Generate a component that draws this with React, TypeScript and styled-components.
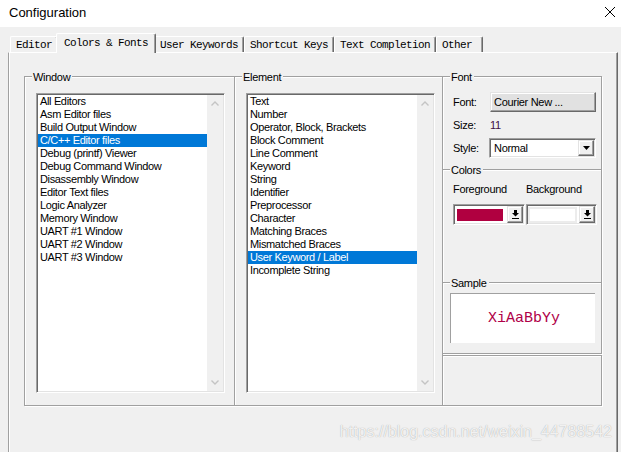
import React from 'react';
import styled, { createGlobalStyle } from 'styled-components';

const windowItems = [
	'All Editors',
	'Asm Editor files',
	'Build Output Window',
	'C/C++ Editor files',
	'Debug (printf) Viewer',
	'Debug Command Window',
	'Disassembly Window',
	'Editor Text files',
	'Logic Analyzer',
	'Memory Window',
	'UART #1 Window',
	'UART #2 Window',
	'UART #3 Window',
];

const elementItems = [
	'Text',
	'Number',
	'Operator, Block, Brackets',
	'Block Comment',
	'Line Comment',
	'Keyword',
	'String',
	'Identifier',
	'Preprocessor',
	'Character',
	'Matching Braces',
	'Mismatched Braces',
	'User Keyword / Label',
	'Incomplete String',
];

const tabs = ['Editor', 'Colors & Fonts', 'User Keywords', 'Shortcut Keys', 'Text Completion', 'Other'];

const GlobalStyle = createGlobalStyle`
	html, body {
		margin: 0;
		padding: 0;
		background: #f0f0f0;
		overflow: hidden;
	}
	body {
		font-family: "Liberation Sans", Arial, sans-serif;
	}
`;

const Window = styled.div`
	position: relative;
	width: 621px;
	height: 452px;
	display: flex;
	flex-direction: column;
	background: #f0f0f0;
	overflow: hidden;
`;

const TitleBar = styled.div`
	flex: none;
	height: 27px;
	box-sizing: border-box;
	display: flex;
	align-items: center;
	justify-content: space-between;
	padding: 0 5px 3px 9px;
	background: #fff;
	font-size: 13px;
	color: #000;
`;

const Body = styled.div`
	flex: 1;
	min-height: 0;
	display: flex;
	flex-direction: column;
	padding: 6px 4px 0 8px;
`;

const TabStrip = styled.div`
	flex: none;
	height: 19px;
	display: flex;
	align-items: flex-end;
	padding-left: 2px;
`;

const Tab = styled.div<{ $active?: boolean }>`
	box-sizing: border-box;
	height: ${(p) => (p.$active ? 20 : 16)}px;
	min-width: 47px;
	margin: 0 ${(p) => (p.$active ? -2 : 0)}px ${(p) => (p.$active ? -1 : 0)}px;
	padding: 0 ${(p) => (p.$active ? 7 : 5)}px ${(p) => (p.$active ? 1 : 0)}px;
	display: flex;
	align-items: center;
	z-index: ${(p) => (p.$active ? 2 : 1)};
	background: #f0f0f0;
	border-top: 1px solid #fff;
	border-left: 1px solid #fff;
	border-right: 1px solid #696969;
	border-radius: 2px 2px 0 0;
	box-shadow: inset -1px 0 #a0a0a0;
	font-family: "Liberation Mono", "Courier New", monospace;
	font-size: 11px;
	letter-spacing: -0.6px;
	white-space: nowrap;
	color: #000;
`;

const Panel = styled.div`
	flex: 1;
	width: 610px;
	box-sizing: border-box;
	display: flex;
	align-items: flex-start;
	padding: 23px 0 0 15px;
	border-top: 1px solid #fff;
	border-left: 1px solid #a0a0a0;
	border-right: 1px solid #696969;
	box-shadow: inset -1px 0 #a0a0a0, inset 1px 0 #fff;
`;

const Group = styled.div<{ $w: number; $h: number }>`
	position: relative;
	flex: none;
	box-sizing: border-box;
	width: ${(p) => p.$w}px;
	height: ${(p) => p.$h}px;
	border: 1px solid #a0a0a0;
	box-shadow: inset 1px 1px #fff, 1px 1px #fff;
`;

const SideColumn = styled.div`
	flex: none;
	width: 160px;
	margin-left: -1px;
	display: flex;
	flex-direction: column;
	& > * + * {
		margin-top: -1px;
	}
	& > *:last-child {
		margin-top: 1px;
	}
`;

const Legend = styled.span`
	position: absolute;
	top: -7px;
	left: 7px;
	padding: 0 2px 0 1px;
	background: #f0f0f0;
	font-size: 11px;
	line-height: 14px;
	letter-spacing: -0.3px;
	color: #000;
`;

const ListBox = styled.div`
	box-sizing: border-box;
	width: 189px;
	height: 300px;
	margin: 16px 0 0 11px;
	display: flex;
	background: #fff;
	border: 1px solid;
	border-color: #a0a0a0 #fff #fff #a0a0a0;
	box-shadow: inset 1px 1px #696969, inset -1px -1px #e3e3e3;
	padding: 1px;
`;

const Items = styled.div`
	flex: 1;
	min-width: 0;
`;

const Item = styled.div<{ $selected?: boolean }>`
	height: 13px;
	line-height: 13px;
	padding-left: 2px;
	font-size: 11px;
	letter-spacing: -0.35px;
	white-space: nowrap;
	color: ${(p) => (p.$selected ? '#fff' : '#000')};
	background: ${(p) => (p.$selected ? '#0078d7' : 'transparent')};
`;

const ScrollBar = styled.div`
	flex: none;
	width: 16px;
	display: flex;
	flex-direction: column;
	justify-content: space-between;
	background: #f0f0f0;
`;

const ScrollBtn = styled.div`
	height: 17px;
	display: flex;
	align-items: center;
	justify-content: center;
`;

const FontGrid = styled.div`
	display: grid;
	grid-template-columns: 37px 106px;
	grid-template-rows: 20px 26px 20px;
	align-items: center;
	padding: 15px 0 0 10px;
	font-size: 11px;
	letter-spacing: -0.3px;
`;

const FieldLabel = styled.span`
	color: #000;
`;

const SizeValue = styled.span`
	color: #3f0f45;
`;

const PushButton = styled.div`
	box-sizing: border-box;
	height: 20px;
	display: flex;
	align-items: center;
	padding-left: 3px;
	background: #e1e1e1;
	border: 1px solid;
	border-color: #e3e3e3 #696969 #696969 #e3e3e3;
	box-shadow: inset -1px -1px #a0a0a0, inset 1px 1px #fff;
	white-space: nowrap;
`;

const Select = styled.div`
	box-sizing: border-box;
	width: 107px;
	height: 20px;
	margin-left: -1px;
	display: flex;
	align-items: center;
	background: #fff;
	border: 1px solid;
	border-color: #a0a0a0 #fff #fff #a0a0a0;
	box-shadow: inset 1px 1px #696969, inset -1px -1px #e3e3e3;
	padding: 1px 1px 1px 4px;
`;

const SelectText = styled.span`
	flex: 1;
`;

const DropBtn = styled.div`
	flex: none;
	box-sizing: border-box;
	width: 16px;
	height: 100%;
	display: flex;
	align-items: center;
	justify-content: center;
	background: #f0f0f0;
	border: 1px solid;
	border-color: #e3e3e3 #696969 #696969 #e3e3e3;
	box-shadow: inset -1px -1px #a0a0a0, inset 1px 1px #fff;
`;

const ColorsGrid = styled.div`
	display: grid;
	grid-template-columns: 72px 71px;
	grid-template-rows: 13px 21px;
	column-gap: 1px;
	row-gap: 8px;
	padding: 13px 0 0 10px;
	font-size: 11px;
	line-height: 13px;
	letter-spacing: -0.3px;
`;

const ColorCombo = styled.div`
	box-sizing: border-box;
	height: 21px;
	display: flex;
	background: #fff;
	border: 1px solid;
	border-color: #a0a0a0 #fff #fff #a0a0a0;
	box-shadow: inset 1px 1px #696969, inset -1px -1px #e3e3e3;
	padding: 1px;
`;

const Swatch = styled.div<{ $color: string; $ring?: boolean }>`
	flex: 1;
	margin: 3px 4px 2px 2px;
	background: ${(p) => p.$color};
	box-shadow: ${(p) => (p.$ring ? '0 0 0 2px #ececec' : 'none')};
`;

const SampleBox = styled.div`
	box-sizing: border-box;
	width: 145px;
	height: 50px;
	margin: 10px 0 0 7px;
	display: flex;
	align-items: center;
	justify-content: center;
	background: #fff;
	border-top: 1px solid #a0a0a0;
	border-left: 1px solid #a0a0a0;
`;

const SampleText = styled.span`
	font-family: "Liberation Mono", "Courier New", monospace;
	font-size: 15px;
	color: #b00048;
	padding-left: 2px;
`;

const Watermark = styled.div`
	position: absolute;
	right: 9px;
	bottom: 11px;
	font-size: 16px;
	line-height: 18px;
	color: rgba(255, 255, 255, 0.85);
	text-shadow: 0 0 1px rgba(0, 0, 0, 0.35);
	pointer-events: none;
`;

const CloseIcon = () => (
	<svg width="12" height="12" viewBox="0 0 12 12">
		<path d="M1 1 L11 11 M11 1 L1 11" stroke="#000" strokeWidth="1" fill="none" />
	</svg>
);

const Chevron = ({ up }: { up?: boolean }) => (
	<svg width="8" height="5" viewBox="0 0 8 5">
		<polyline
			points={up ? '0.5,4.5 4,1 7.5,4.5' : '0.5,0.5 4,4 7.5,0.5'}
			stroke="#c4c4c4"
			strokeWidth="1.4"
			fill="none"
		/>
	</svg>
);

const TriangleDown = () => (
	<svg width="7" height="4" viewBox="0 0 7 4">
		<polygon points="0,0 7,0 3.5,4" fill="#000" />
	</svg>
);

const ArrowDownBar = () => (
	<svg width="7" height="9" viewBox="0 0 7 9">
		<rect x="2" y="0" width="3" height="3" fill="#000" />
		<polygon points="0,3 7,3 3.5,6.5" fill="#000" />
		<rect x="0" y="8" width="7" height="1" fill="#000" />
	</svg>
);

const List = ({ items, selected }: { items: string[]; selected: string }) => (
	<ListBox>
		<Items>
			{items.map((item) => (
				<Item key={item} $selected={item === selected}>
					{item}
				</Item>
			))}
		</Items>
		<ScrollBar>
			<ScrollBtn>
				<Chevron up />
			</ScrollBtn>
			<ScrollBtn>
				<Chevron />
			</ScrollBtn>
		</ScrollBar>
	</ListBox>
);

export default function App() {
	return (
		<>
			<GlobalStyle />
			<Window>
				<TitleBar>
					<span>Configuration</span>
					<CloseIcon />
				</TitleBar>
				<Body>
					<TabStrip>
						{tabs.map((tab) => (
							<Tab key={tab} $active={tab === 'Colors & Fonts'}>
								{tab}
							</Tab>
						))}
					</TabStrip>
					<Panel>
						<Group $w={211} $h={330}>
							<Legend>Window</Legend>
							<List items={windowItems} selected="C/C++ Editor files" />
						</Group>
						<Group $w={209} $h={330} style={{ marginLeft: -1 }}>
							<Legend>Element</Legend>
							<List items={elementItems} selected="User Keyword / Label" />
						</Group>
						<SideColumn>
							<Group $w={160} $h={94}>
								<Legend>Font</Legend>
								<FontGrid>
									<FieldLabel>Font:</FieldLabel>
									<PushButton>Courier New ...</PushButton>
									<FieldLabel>Size:</FieldLabel>
									<SizeValue>11</SizeValue>
									<FieldLabel>Style:</FieldLabel>
									<Select>
										<SelectText>Normal</SelectText>
										<DropBtn>
											<TriangleDown />
										</DropBtn>
									</Select>
								</FontGrid>
							</Group>
							<Group $w={160} $h={114}>
								<Legend>Colors</Legend>
								<ColorsGrid>
									<FieldLabel>Foreground</FieldLabel>
									<FieldLabel>Background</FieldLabel>
									<ColorCombo>
										<Swatch $color="#b00040" />
										<DropBtn>
											<ArrowDownBar />
										</DropBtn>
									</ColorCombo>
									<ColorCombo>
										<Swatch $color="#fff" $ring />
										<DropBtn>
											<ArrowDownBar />
										</DropBtn>
									</ColorCombo>
								</ColorsGrid>
							</Group>
							<Group $w={160} $h={72}>
								<Legend>Sample</Legend>
								<SampleBox>
									<SampleText>XiAaBbYy</SampleText>
								</SampleBox>
							</Group>
							<Group $w={160} $h={51} />
						</SideColumn>
					</Panel>
				</Body>
				<Watermark>https://blog.csdn.net/weixin_44788542</Watermark>
			</Window>
		</>
	);
}
